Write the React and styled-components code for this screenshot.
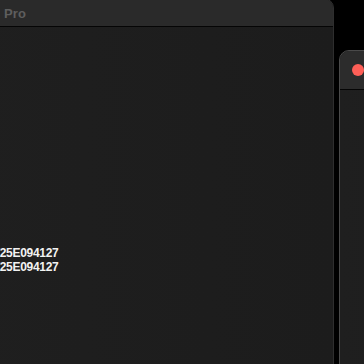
import React from "react";
import styled, { createGlobalStyle } from "styled-components";

const Global = createGlobalStyle`
  html, body { margin: 0; padding: 0; background: #000; overflow: hidden; }
  body { font-family: "Liberation Sans", Arial, sans-serif; }
`;

const Desktop = styled.div`
  position: relative;
  width: 364px;
  height: 364px;
  background: #000;
  overflow: hidden;
`;

const Window = styled.div`
  position: absolute;
  left: ${(p) => p.$left}px;
  top: ${(p) => p.$top}px;
  width: ${(p) => p.$width}px;
  height: ${(p) => p.$height}px;
  display: flex;
  flex-direction: column;
  border-radius: 10px;
  border: 1px solid ${(p) => p.$border};
  background: #1e1e1e;
  overflow: hidden;
  box-sizing: border-box;
`;

const TitleBar = styled.div`
  flex: none;
  height: ${(p) => p.$h}px;
  display: flex;
  align-items: center;
  gap: 8px;
  padding-left: ${(p) => p.$pad}px;
  padding-top: ${(p) => p.$padTop || 0}px;
  box-sizing: border-box;
  background: ${(p) => p.$bg};
  border-bottom: 1px solid #050505;
`;

const Title = styled.span`
  font-size: 13px;
  font-weight: 700;
  color: #5e5e5e;
  letter-spacing: 0.1px;
`;

const Dot = styled.span`
  width: 12px;
  height: 12px;
  border-radius: 50%;
  background: ${(p) => p.$c};
  flex: none;
`;

const Body = styled.div`
  flex: 1;
  background: linear-gradient(to right, #1f1f1f, #1c1c1c);
  display: flex;
  flex-direction: column;
  padding-top: 219px;
  padding-left: ${(p) => p.$pad}px;
`;

const Line = styled.div`
  font-size: 12px;
  font-weight: 700;
  color: #f2f2f2;
  line-height: 14px;
  letter-spacing: -0.3px;
  white-space: nowrap;
`;

export default function App() {
  return (
    <>
      <Global />
      <Desktop>
        <Window $left={-40} $top={-2} $width={374} $height={420} $border="#2e2e2e">
          <TitleBar $h={28} $pad={43} $padTop={1} $bg="#2a2a2a">
            <Title>Pro</Title>
          </TitleBar>
          <Body $pad={31}>
            <Line>V25E094127</Line>
            <Line>V25E094127</Line>
          </Body>
        </Window>
        <Window $left={339} $top={50} $width={200} $height={360} $border="#4a4a4a">
          <TitleBar $h={39} $pad={12} $bg="#2c2c2c">
            <Dot $c="#fe5f57" />
            <Dot $c="#febc2e" />
          </TitleBar>
          <Body $pad={10} />
        </Window>
      </Desktop>
    </>
  );
}
